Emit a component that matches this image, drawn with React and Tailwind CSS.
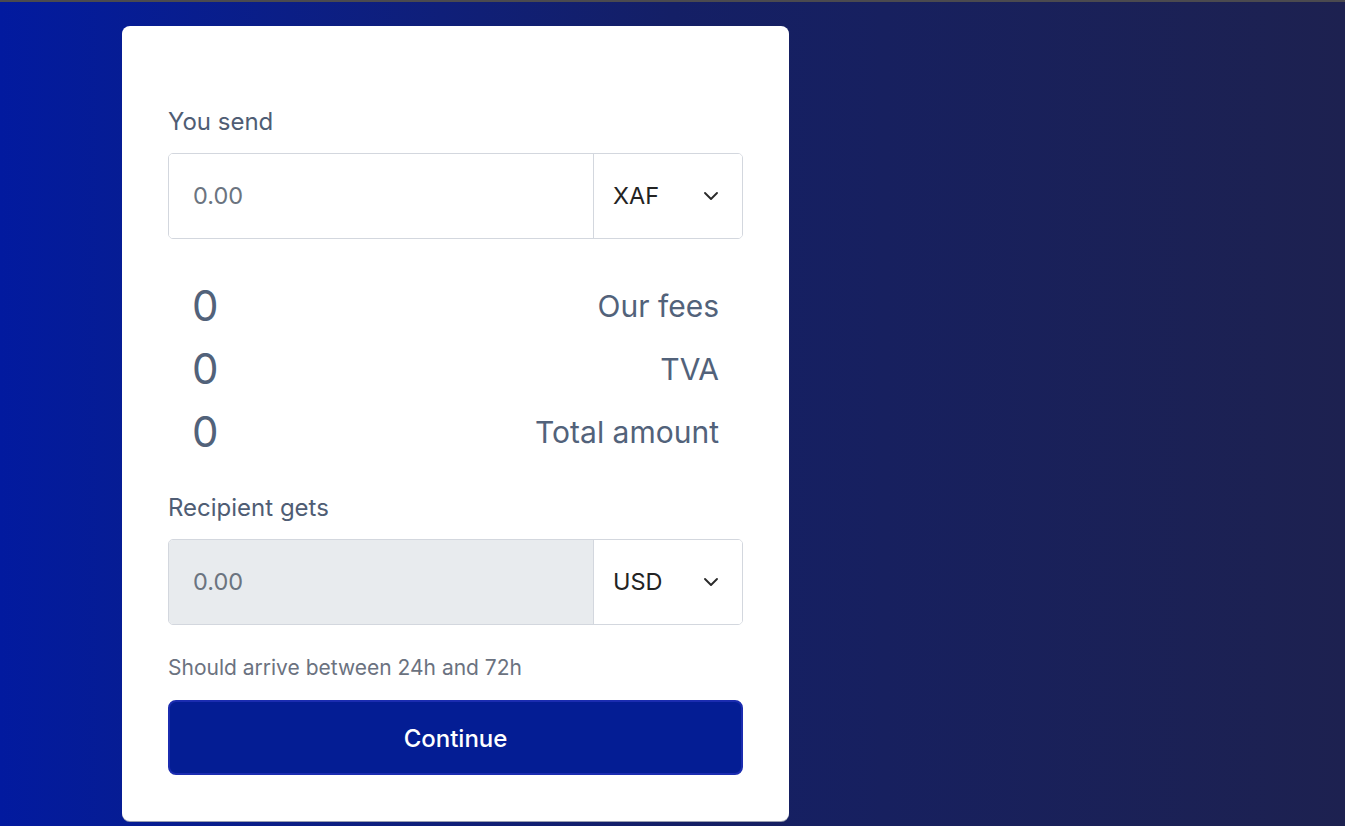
import React from "react";

function Chevron() {
  return (
    <svg width="16" height="10" viewBox="0 0 16 10" fill="none" className="shrink-0">
      <path d="M2 2 L8 8 L14 2" stroke="#2a2a2a" strokeWidth="1.9" strokeLinecap="round" strokeLinejoin="round" />
    </svg>
  );
}

function AmountField({ currency, disabled }) {
  return (
    <div className="flex h-[86px] w-full rounded-[5px] border border-[#d3d7de] overflow-hidden">
      <div className={`flex flex-1 items-center pl-[24px] ${disabled ? "bg-[#e8ebee]" : "bg-white"}`}>
        <span className="text-[23.5px] text-[#6b7480]">0.00</span>
      </div>
      <div className="flex w-[149px] items-center justify-between border-l border-[#d3d7de] bg-white pl-[19px] pr-[23px]">
        <span className="text-[23.5px] text-[#232323]">{currency}</span>
        <Chevron />
      </div>
    </div>
  );
}

function Row({ label }) {
  return (
    <div className="flex h-[63px] items-center justify-between pl-[24px] pr-[24px]">
      <span className="text-[42px] leading-none text-[#52627a]">0</span>
      <span className="text-[30px] leading-none text-[#52627a]">{label}</span>
    </div>
  );
}

export default function App() {
  return (
    <div
      className="min-h-[826px] w-full border-t-2 border-[#4b4a4f] bg-gradient-to-r from-[#021a9f] via-[#141f66] to-[#1d2150]"
      style={{ fontFamily: "Inter, 'Noto Sans', sans-serif" }}
    >
      <div className="ml-[122px] mt-[24px] flex h-[795px] w-[667px] flex-col rounded-[8px] bg-white px-[46px] pt-[80px] shadow-[0_1px_0_#9a9fb0]">
        <div className="text-[24px] leading-[32px] text-[#4f5d74]">You send</div>
        <div className="mt-[15px]">
          <AmountField currency="XAF" />
        </div>
        <div className="mt-[35px] flex flex-col">
          <Row label="Our fees" />
          <Row label="TVA" />
          <Row label="Total amount" />
        </div>
        <div className="mt-[29px] text-[24px] leading-[32px] text-[#4f5d74]">Recipient gets</div>
        <div className="mt-[15px]">
          <AmountField currency="USD" disabled />
        </div>
        <div className="mt-[29px] text-[21px] leading-[28px] text-[#6b7280]">Should arrive between 24h and 72h</div>
        <button className="mt-[18px] flex h-[75px] w-full items-center justify-center rounded-[8px] border-2 border-[#1b2cb0] bg-[#041d94] pt-[2px] text-[24px] font-medium text-white">
          Continue
        </button>
      </div>
    </div>
  );
}
